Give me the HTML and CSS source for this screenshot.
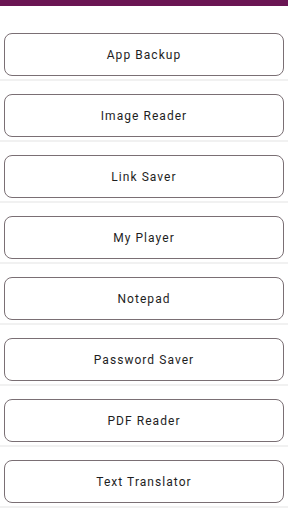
FILE: index.html
```html
<!DOCTYPE html>
<html lang="en">
<head>
    <meta charset="UTF-8">
    <meta name="viewport" content="width=device-width, initial-scale=1.0">
    <link rel="stylesheet" href="styles.css">
    <title>Apps</title>
</head>
<body>

<div class="top-bar"></div>

<div class="list">
    <div class="row"><button class="app-button">App Backup</button></div>
    <div class="row"><button class="app-button">Image Reader</button></div>
    <div class="row"><button class="app-button">Link Saver</button></div>
    <div class="row"><button class="app-button">My Player</button></div>
    <div class="row"><button class="app-button">Notepad</button></div>
    <div class="row"><button class="app-button">Password Saver</button></div>
    <div class="row"><button class="app-button">PDF Reader</button></div>
    <div class="row"><button class="app-button">Text Translator</button></div>
</div>

</body>
</html>
```

FILE: styles.css
```css
body {
    font-family: Roboto, "Noto Sans", sans-serif;
    background-color: #fff;
    margin: 0;
    padding: 0;
    overflow: hidden;
}

.top-bar {
    height: 6px;
    background-color: #6a1553;
}

.list {
    margin-top: 14px;
}

.row {
    padding: 13px 4px 3px;
    border-bottom: 2px solid #f1f1f1;
}

.app-button {
    display: block;
    width: 100%;
    height: 43px;
    padding-top: 2px;
    background-color: #fff;
    border: 1px solid #7a6f74;
    border-radius: 8px;
    font-family: Roboto, sans-serif;
    font-size: 12px;
    letter-spacing: 1.05px;
    color: #1e1e1e;
    cursor: pointer;
}
```
